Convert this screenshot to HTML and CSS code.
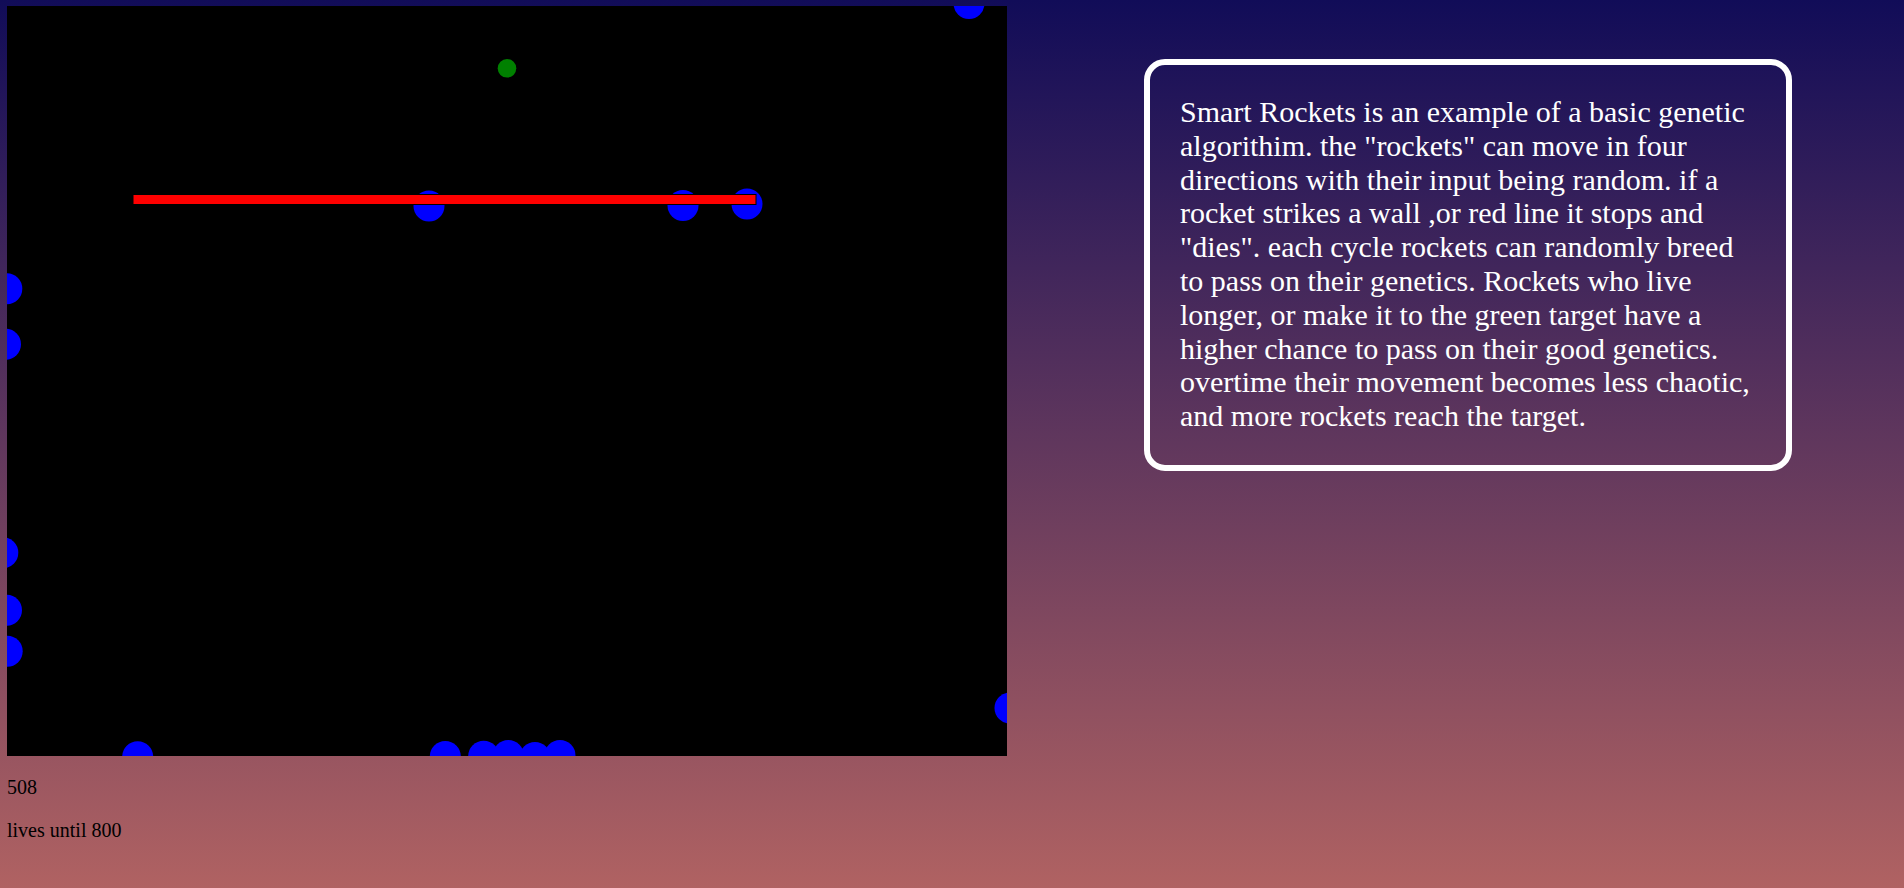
FILE: index.html
```html
<!DOCTYPE html>
<html lang="en">
<head>
<meta charset="utf-8">
<title>Smart Rockets</title>
<link rel="stylesheet" href="styles.css">
</head>
<body>
<main class="layout">
  <section class="sim">
    <svg class="canvas" width="1000" height="750" viewBox="0 0 1000 750" xmlns="http://www.w3.org/2000/svg">
      <rect x="0" y="0" width="1000" height="750" fill="#000"/>
      <circle cx="500" cy="62.3" r="9.3" fill="#008000"/>
      <g fill="#0000ff">
        <circle cx="962" cy="-2.5" r="15.5"/>
        <circle cx="422" cy="200" r="15.5"/>
        <circle cx="676" cy="199.5" r="15.5"/>
        <circle cx="740" cy="198" r="15.5"/>
        <circle cx="-0.2" cy="282.8" r="15.5"/>
        <circle cx="-1.5" cy="338.3" r="15.5"/>
        <circle cx="-4.2" cy="546.8" r="15.5"/>
        <circle cx="-0.5" cy="604.3" r="15.5"/>
        <circle cx="0.2" cy="645.2" r="15.5"/>
        <circle cx="1003" cy="702" r="15.5"/>
        <circle cx="130.7" cy="750.7" r="15.5"/>
        <circle cx="438.3" cy="750.5" r="15.5"/>
        <circle cx="476.7" cy="750.2" r="15.5"/>
        <circle cx="501.3" cy="749.5" r="15.5"/>
        <circle cx="528" cy="751.5" r="15.5"/>
        <circle cx="553" cy="749.5" r="15.5"/>
      </g>
      <rect x="126" y="188.5" width="623" height="10" fill="#ff0000" stroke="#000" stroke-width="1"/>
    </svg>
    <p class="stat">508</p>
    <p class="stat">lives until 800</p>
  </section>
  <aside class="info">
    <p class="info-text">Smart Rockets is an example of a basic genetic algorithim. the "rockets" can move in four directions with their input being random. if a rocket strikes a wall ,or red line it stops and "dies". each cycle rockets can randomly breed to pass on their genetics. Rockets who live longer, or make it to the green target have a higher chance to pass on their good genetics. overtime their movement becomes less chaotic, and more rockets reach the target.</p>
  </aside>
</main>
</body>
</html>
```
FILE: styles.css
```css
html {
  height: 100%;
}
body {
  margin: 0;
  min-height: 100vh;
  box-sizing: border-box;
  padding: 6px 0 0 7px;
  font-family: "Liberation Serif", "Times New Roman", serif;
  color: #000;
  background: linear-gradient(to bottom, #110c58 0%, #b06262 100%);
  background-attachment: fixed;
}
.layout {
  display: flex;
  align-items: flex-start;
}
.sim {
  flex: 0 0 auto;
}
.canvas {
  display: block;
}
.stat {
  margin: 20px 0;
  font-size: 20px;
}
.info {
  box-sizing: border-box;
  width: 648px;
  margin: 53px 0 0 137px;
  padding: 30px 22px 32px 30px;
  border: 6px solid #fff;
  border-radius: 21px;
  color: #fff;
}
.info-text {
  margin: 0;
  font-size: 30px;
  line-height: 33.8px;
}
```
